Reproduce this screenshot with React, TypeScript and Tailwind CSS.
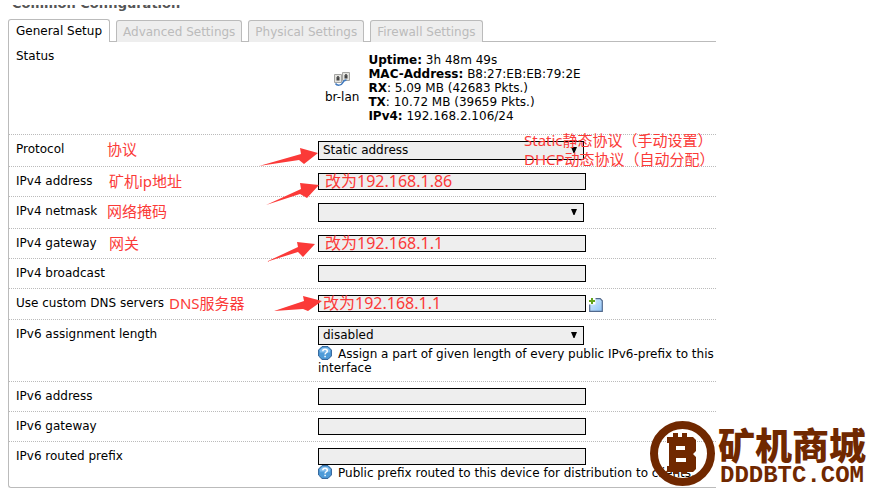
import type { ReactNode } from "react";

const tabs = ["General Setup", "Advanced Settings", "Physical Settings", "Firewall Settings"];

const stats = [
  { name: "Uptime:", value: "3h 48m 49s" },
  { name: "MAC-Address:", value: "B8:27:EB:EB:79:2E" },
  { name: "RX", value: ": 5.09 MB (42683 Pkts.)" },
  { name: "TX", value: ": 10.72 MB (39659 Pkts.)" },
  { name: "IPv4:", value: "192.168.2.106/24" },
];

const HelpIcon = () => (
  <svg viewBox="0 0 14 14" className="mr-[6px] inline-block size-[14px] align-[-2px]" aria-hidden="true">
    <path d="M4 .6h6L13.4 4v6L10 13.4H4L.6 10V4z" fill="#4e9bd8" stroke="#2d5f96" strokeWidth="1" />
    <path d="M4.3 1.800h5.400l2.400 2.400v2.300H1.900V4.200z" fill="#83bdec" />
    <path d="M4.800 5.200c0-2.600 4.500-2.600 4.500 0 0 1.600-2.200 1.500-2.200 3.200M7.100 9.800v1.400" fill="none" stroke="#fff" strokeWidth="1.500" />
  </svg>
);

const BridgeIcon = () => (
  <svg viewBox="0 0 16 14" className="h-[14px] w-[16px]" aria-hidden="true">
    <path d="M8.5 0.5h7v8h-7zM.5 2.5h7v8h-7z" fill="#e4e4e0" stroke="#a5a5a2" />
    <path d="M10.5 3h3v3.5h-3zM2.5 5h3v3.5h-3z" fill="#444" />
    <path d="M11 2h2v1.5h-2zM3 4h2v1.5H3z" fill="#666" />
    <path d="M1.500 11.500c1.500 2.500 6 2 7-.5s2-3 4-3" fill="none" stroke="#3f78bd" strokeWidth="1.500" />
  </svg>
);

const AddIcon = () => (
  <svg viewBox="0 0 14 14" className="size-[14px]" aria-hidden="true">
    <defs>
      <linearGradient id="page" x1="0" y1="0" x2="1" y2="1">
        <stop offset="0" stopColor="#d9edff" />
        <stop offset="1" stopColor="#8fc4f8" />
      </linearGradient>
    </defs>
    <path d="M.7 .7h10.500l2.100 2.100v10.500H.7z" fill="url(#page)" stroke="#52698c" strokeWidth="1.200" />
    <path d="M0 0h6.500v6.500H0z" fill="#fff" />
    <path d="M2 0h2v2h2v2H4v2H2V4H0V2h2z" fill="#64a51c" />
  </svg>
);

// Hand drawn pointers, one outline per direction
const arrows = {
  protocol: "M0 18L42 6L41 0L59 5L45 16L40 12Z",
  address: "M0 22L35 6L34 0L53 2L41 15L34 11Z",
  gateway: "M0 20L32 5L31 0L49 2L37 15L32 10Z",
  dns: "M0 15L30 5L29 0L48 5L34 15L29 13Z",
};

const Arrow = ({ shape, className }: { shape: keyof typeof arrows; className: string }) => (
  <svg viewBox="0 0 60 24" className={`pointer-events-none absolute h-[24px] w-[60px] ${className}`} aria-hidden="true">
    <path d={arrows[shape]} fill="#fb3a38" />
  </svg>
);

interface RowProps {
  id: string;
  label: string;
  note?: ReactNode;
  last?: boolean;
  children: ReactNode;
}

const Row = ({ id, label, note, last, children }: RowProps) => (
  <div className={`relative flex pt-[6px] pl-[7px] ${last ? "pb-[7px]" : "border-b border-dotted border-[#bbb] pb-[6px]"}`}>
    <label htmlFor={id} className="w-[302px] shrink-0 pt-px">
      {label}
    </label>
    <div className="min-w-0 flex-1">{children}</div>
    {note}
  </div>
);

const Note = ({ className, children }: { className: string; children: ReactNode }) => (
  <span className={`pointer-events-none absolute top-[5px] font-['Noto_Sans','Noto_Sans_CJK_SC',sans-serif] text-[15px] leading-[19px] whitespace-nowrap text-[#fb3a38] ${className}`}>
    {children}
  </span>
);

const Change = ({ className, children }: { className: string; children: ReactNode }) => (
  <span className={`pointer-events-none absolute top-[5px] font-['Noto_Sans','Noto_Sans_CJK_SC',sans-serif] text-[16px] leading-[19px] whitespace-nowrap text-[#fb3a38] ${className}`}>
    {children}
  </span>
);

const TextField = ({ id }: { id: string }) => (
  <input id={id} type="text" className="block h-[17px] w-[268px] border border-black bg-[#eee] px-1 text-[12px] outline-none" />
);

const SelectField = ({ id, options }: { id: string; options: string[] }) => (
  <div className="relative h-[19px] w-[266px]">
    <select id={id} className="block size-full appearance-none border border-black bg-[#eee] px-1 text-[12px] leading-[17px] outline-none">
      {options.map((option) => (
        <option key={option}>{option}</option>
      ))}
    </select>
    <svg viewBox="0 0 6 6" className="pointer-events-none absolute top-[6px] right-[7px] size-[6px]" aria-hidden="true">
      <path d="M0 0h6L3.500 6h-1z" />
    </svg>
  </div>
);

const Logo = () => (
  <div className="pointer-events-none absolute top-[421px] left-[650px] flex items-start gap-[3px] text-[#702800]">
    <svg viewBox="0 0 65 65" className="size-[65px]" aria-hidden="true">
      <circle cx="32.500" cy="32.500" r="28.500" fill="none" stroke="currentColor" strokeWidth="8" />
      <path
        fill="currentColor"
        fillRule="evenodd"
        d="M17 16h6v-4h5v4h4v-4h5v4h6l3 3v11l-3 3 3 3v12l-3 3h-6v2h-5v-2h-4v2h-5v-2h-6v-6h2V22h-2zM26 25v4h9v-4zM26 37v4h10v-4z"
      />
    </svg>
    <div className="whitespace-nowrap">
      <div className="pt-[3px] font-['Noto_Sans_CJK_SC',sans-serif] text-[37px] leading-[40px] font-black">矿机商城</div>
      <div className="pl-[2px] font-['Liberation_Mono',monospace] text-[24px] leading-[24px] font-bold">DDDBTC.COM</div>
    </div>
  </div>
);

export default function App() {
  return (
    <main className="relative min-h-screen overflow-hidden bg-white pt-[5px] pl-2 font-['DejaVu_Sans',sans-serif] text-[12px] leading-[14px] text-black">
      <div className="mr-[155px]">
        <h2 className="flex h-[6px] items-end overflow-hidden pl-1 text-[13px] leading-[15px] font-bold text-[#555]">
          Common Configuration
        </h2>

        <div className="mt-[8px] flex h-[23px] items-end" role="tablist">
          {tabs.map((tab, i) => (
            <div key={tab} className="flex h-full items-end">
              <button
                type="button"
                role="tab"
                aria-selected={i === 0}
                className={`rounded-t-[3px] border-x border-t border-[#bbb] whitespace-nowrap ${
                  i === 0 ? "h-[23px] bg-white px-[7px]" : "h-[22px] bg-[#eee] px-[6px] text-[#bbb]"
                }`}
              >
                {tab}
              </button>
              {i < tabs.length - 1 && <div className="w-[6px] border-b border-[#bbb]" />}
            </div>
          ))}
          <div className="flex-1 border-b border-[#bbb]" />
        </div>

        <form className="rounded-bl-[3px] border-b border-l border-[#bbb]">
          <div className="flex h-[93px] border-b border-dotted border-[#bbb] pt-[7px] pl-[7px]">
            <span className="w-[302px] shrink-0">Status</span>
            <div className="flex gap-[9px] pt-[4px] pl-[7px]">
              <div className="flex flex-col items-center gap-[4px] pt-[19px]">
                <BridgeIcon />
                <span>br-lan</span>
              </div>
              <ul>
                {stats.map(({ name, value }) => (
                  <li key={name}>
                    <strong>{name}</strong>
                    {name.endsWith(":") && " "}
                    {value}
                  </li>
                ))}
              </ul>
            </div>
          </div>

          <Row
            id="proto"
            label="Protocol"
            note={
              <>
                <Note className="left-[98px]">协议</Note>
                <Arrow shape="protocol" className="top-[13px] left-[250px]" />
                <div className="pointer-events-none absolute top-[-4px] left-[515px] z-10 font-['Noto_Sans','Noto_Sans_CJK_SC',sans-serif] text-[15px] leading-[19px] whitespace-nowrap text-[#fb3a38]">
                  <p>Static静态协议（手动设置）</p>
                  <p>DHCP动态协议（自动分配）</p>
                </div>
              </>
            }
          >
            <SelectField id="proto" options={["Static address", "DHCP client"]} />
          </Row>
          <Row
            id="ipaddr"
            label="IPv4 address"
            note={
              <>
                <Note className="left-[100px]">矿机ip地址</Note>
                <Arrow shape="address" className="top-[16px] left-[257px]" />
                <Change className="left-[316px]">改为192.168.1.86</Change>
              </>
            }
          >
            <TextField id="ipaddr" />
          </Row>
          <Row id="netmask" label="IPv4 netmask" note={<Note className="left-[98px]">网络掩码</Note>}>
            <SelectField id="netmask" options={["", "255.255.255.0", "255.255.0.0", "255.0.0.0"]} />
          </Row>
          <Row
            id="gateway"
            label="IPv4 gateway"
            note={
              <>
                <Note className="left-[100px]">网关</Note>
                <Arrow shape="gateway" className="top-[13px] left-[257px]" />
                <Change className="left-[316px]">改为192.168.1.1</Change>
              </>
            }
          >
            <TextField id="gateway" />
          </Row>
          <Row id="broadcast" label="IPv4 broadcast">
            <TextField id="broadcast" />
          </Row>
          <Row
            id="dns"
            label="Use custom DNS servers"
            note={
              <>
                <Note className="left-[160px]">DNS服务器</Note>
                <Arrow shape="dns" className="top-[7px] left-[265px]" />
                <Change className="left-[314px]">改为192.168.1.1</Change>
              </>
            }
          >
            <div className="flex h-[18px] items-start gap-[3px]">
              <TextField id="dns" />
              <button type="button" aria-label="Add DNS server" className="pt-[3px]">
                <AddIcon />
              </button>
            </div>
          </Row>
          <Row id="ip6assign" label="IPv6 assignment length">
            <SelectField id="ip6assign" options={["disabled", "64"]} />
            <p className="pt-px">
              <HelpIcon />
              Assign a part of given length of every public IPv6-prefix to this interface
            </p>
          </Row>
          <Row id="ip6addr" label="IPv6 address">
            <TextField id="ip6addr" />
          </Row>
          <Row id="ip6gw" label="IPv6 gateway">
            <TextField id="ip6gw" />
          </Row>
          <Row id="ip6prefix" label="IPv6 routed prefix" last>
            <TextField id="ip6prefix" />
            <p>
              <HelpIcon />
              Public prefix routed to this device for distribution to clients.
            </p>
          </Row>
        </form>
      </div>
      <Logo />
    </main>
  );
}
